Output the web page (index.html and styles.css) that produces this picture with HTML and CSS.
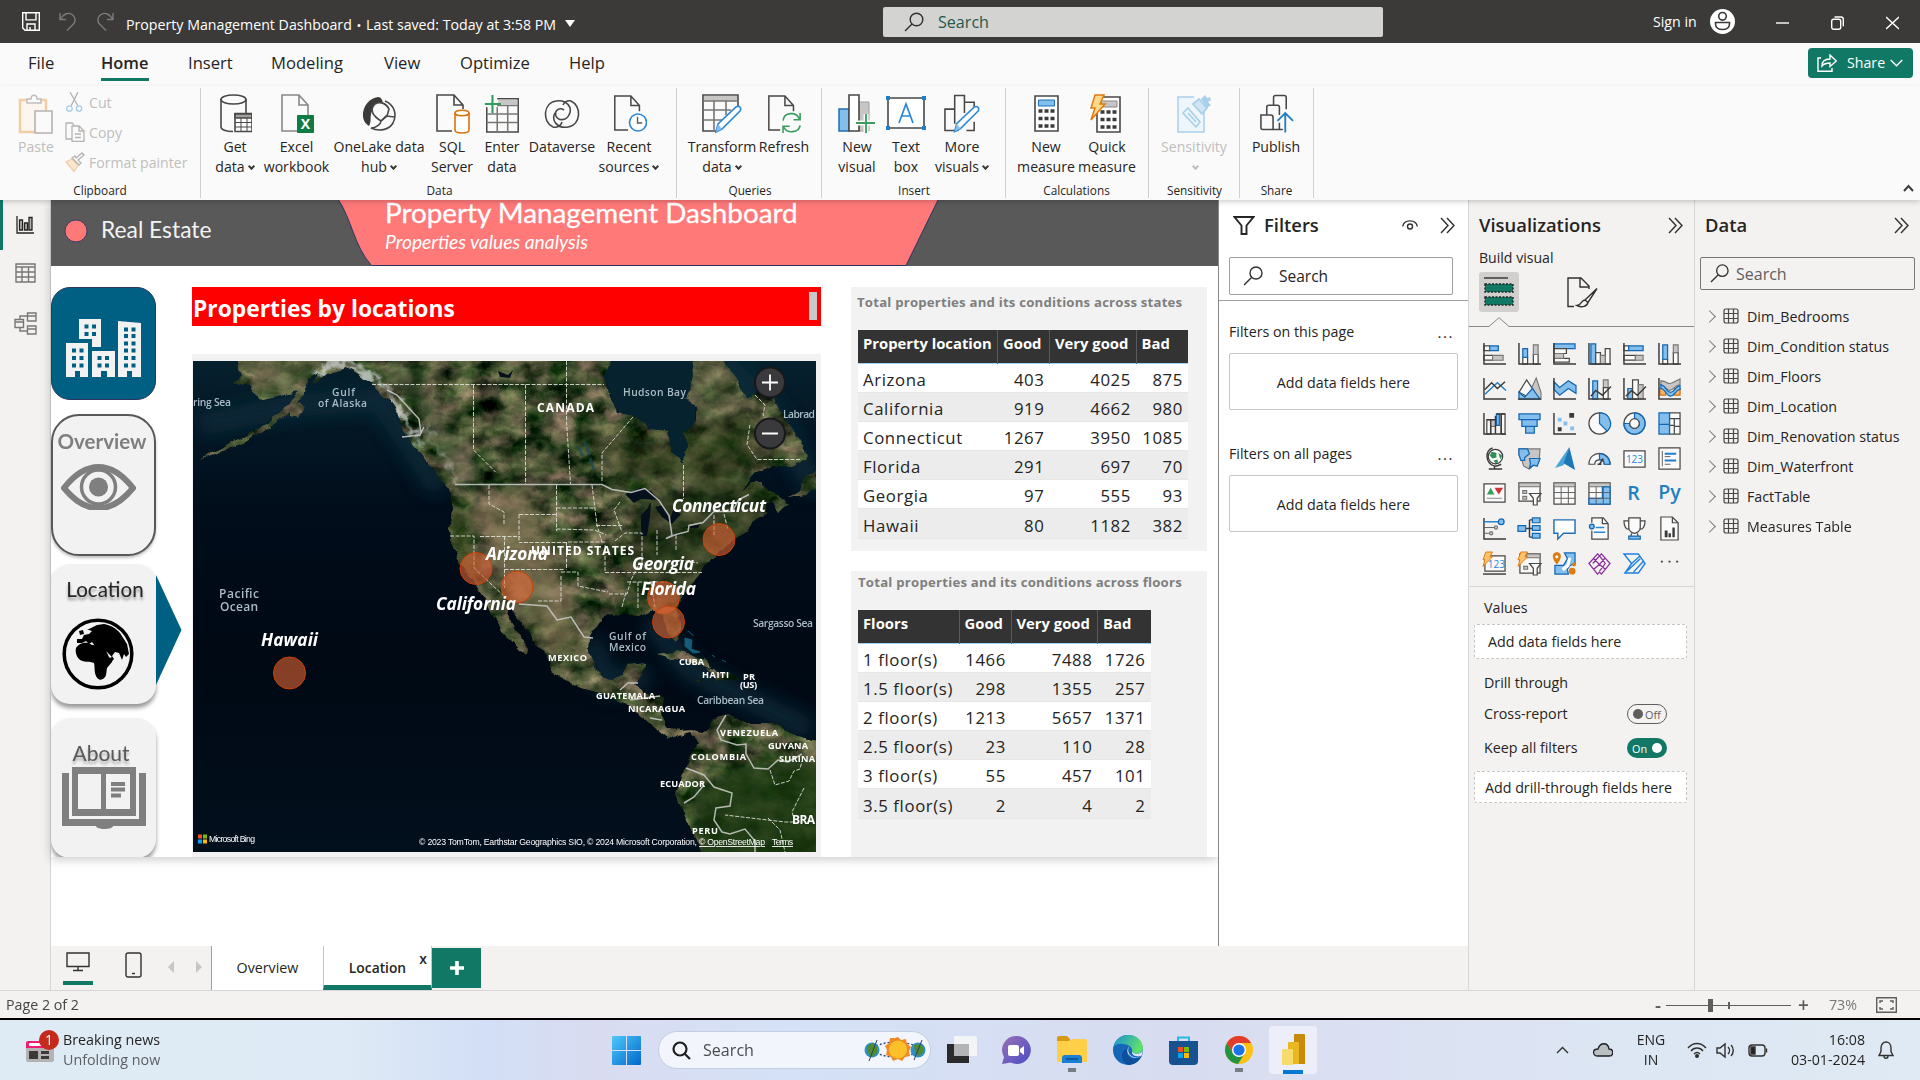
FILE: index.html
```html
<!DOCTYPE html>
<html lang="en">
<head>
<meta charset="utf-8">
<title>Property Management Dashboard</title>
<link rel="stylesheet" href="styles.css">
</head>
<body>
<div class="app">
  <header class="titlebar">
    <div class="quick">
      <svg width="18" height="19" viewBox="0 0 18 19" class="ln white"><path d="M.7 .7h16.6v17.6H3L.7 16zM4 .7v7.2h10V.7M5 18v-6h8v6M8 18v-3"/></svg>
      <svg width="18" height="19" viewBox="0 0 18 19" class="ln dim"><path d="M1 1v6.500h6M1 7.500C4 2 9 0 13 2.500s4 7 1 10L8 18.500"/></svg>
      <svg width="18" height="19" viewBox="0 0 18 19" class="ln dim"><path d="M17 1v6.500h-6M17 7.500C14 2 9 0 5 2.500s-4 7-1 10l6 6"/></svg>
    </div>
    <div class="doc">Property Management Dashboard <b>•</b> Last saved: Today at 3:58 PM <i class="tri"></i></div>
    <div class="topsearch"><svg width="20" height="20" viewBox="0 0 20 20" class="ln"><circle cx="12.500" cy="7.500" r="6.300"/><path d="M8 12L1 19"/></svg>Search</div>
    <div class="signin">Sign in
      <svg width="25" height="25" viewBox="0 0 25 25"><circle cx="12.500" cy="12.500" r="12.500" fill="#fff"/><g fill="none" stroke="#3b3a39" stroke-width="1.600"><circle cx="12.500" cy="7.300" r="3.800"/><path d="M5.500 13.500h14v1.500c0 3.500-3 5.500-7 5.500s-7-2-7-5.500z"/></g></svg>
    </div>
    <div class="winbtns">
      <svg width="13" height="14" viewBox="0 0 13 14" class="ln white"><path d="M0 7h13"/></svg>
      <svg width="13" height="14" viewBox="0 0 13 14" class="ln white"><rect x=".700" y="3.300" width="9" height="10" rx="2"/><path d="M3.500 1h6.500q2.300 0 2.300 2.300v7"/></svg>
      <svg width="13" height="14" viewBox="0 0 13 14" class="ln white"><path d="M0 1l13 12M13 1L0 13"/></svg>
    </div>
  </header>

  <nav class="menubar">
    <span class="m1">File</span><span class="m2 on">Home</span><span class="m3">Insert</span><span class="m4">Modeling</span><span class="m5">View</span><span class="m6">Optimize</span><span class="m7">Help</span>
    <div class="share"><svg width="20" height="18" viewBox="0 0 20 18" class="ln white"><path d="M4 4H1v13.300h14V14M5 12c0-5 3-7 8-7V1l6.300 6L13 12.500V9c-4 0-6 .500-8 3z"/></svg><span>Share</span><svg width="13" height="8" viewBox="0 0 13 8" class="ln white"><path d="M.7 1l5.800 5.800L12.300 1"/></svg></div>
  </nav>

  <section class="ribbon">
    <div class="group g-clip">
      <div class="btns">
        <div class="rb off paste"><svg width="36" height="40" viewBox="0 0 36 40"><path d="M2 6h26v32H2z" fill="#fdf6ec" stroke="#f2cda5" stroke-width="2.500"/><path d="M9 9V5h4c0-5 6-5 6 0h4v4z" fill="#fafafa" stroke="#c0bebd" stroke-width="1.500"/><path d="M17 17h17v22H17z" fill="#fafafa" stroke="#b5b3b2" stroke-width="1.600"/></svg><p>Paste</p></div>
        <div class="clips">
          <div><svg width="20" height="20" viewBox="0 0 20 20" fill="none" stroke-width="1.300"><path d="M5 0l8 14M13 0L6 14" stroke="#b5b3b2"/><circle cx="4.500" cy="16.500" r="2.700" stroke="#a3cdec"/><circle cx="14" cy="16.500" r="2.700" stroke="#a3cdec"/></svg>Cut</div>
          <div><svg width="20" height="20" viewBox="0 0 20 20" fill="none" stroke-width="1.300" stroke="#b5b3b2"><path d="M7 17H1V1h6l2 2M7 4h7l5 5v10.300H7zM14 4v5h5M10 12h6M10 15.500h6"/></svg>Copy</div>
          <div><svg width="20" height="20" viewBox="0 0 20 20" fill="#fafafa" stroke-width="1.300"><path d="M1 10l6-3 6 6-4 6.500z" fill="#fbe6cf" stroke="#f2cda5"/><path d="M7 6l7 7 2-2-3-3 6-5-2-2-6 5-1-2z" stroke="#b5b3b2"/></svg>Format painter</div>
        </div>
      </div>
      <h6>Clipboard</h6>
    </div>
    <div class="group g-data">
      <div class="btns">
        <div class="rb w56"><svg width="34" height="40" viewBox="-2 0 34 40"><g class="ico"><path d="M1 5v28c0 2.500 5 4.500 12 4.500M26 5v14"/><ellipse cx="13.500" cy="5.500" rx="12.500" ry="4.500"/><path d="M15 19.500h17v18H15z" fill="#fff"/><path d="M15 20h17v4H15z" fill="#a19f9d"/><path d="M15 28.500h17M15 33h17M21 24v13.500M27 24v13.500" stroke-width="1"/></g></svg><p>Get<br>data<u></u></p></div>
        <div class="rb w67"><svg width="34" height="40" viewBox="-1 0 34 40"><g class="ico"><path d="M16 37H1V1h17l9 10v11M18 1v10h9" stroke="#8a8886"/></g><rect x="16" y="21" width="17" height="18" rx="1" fill="#107c41"/><text x="24.500" y="35" class="xl">X</text></svg><p>Excel<br>workbook</p></div>
        <div class="rb w98"><svg width="36" height="38" viewBox="0 0 36 38"><path d="M17 2c-8 1-16 9-15 20 1 5 3 7 6 9 4-6-2-12 8-22l6 1c0-5-2-8-5-8z" fill="#3b3a39"/><g class="ico"><path d="M14 9c5-3 11-1 14 5l-2 7-6 5C12 21 8 15 14 9z" fill="#fafafa"/><path d="M24 6c10 4 12 14 8 22-4 7-14 9-22 5 5 0 10-4 10-7l5-5 9 1"/></g></svg><p>OneLake data<br>hub<u></u></p></div>
        <div class="rb w48"><svg width="36" height="40" viewBox="-2 0 36 40"><g class="ico"><path d="M16 37H1V1h17l9 10v4M18 1v10h9"/></g><g fill="#fff" stroke="#d9730d" stroke-width="1.600"><path d="M19 19v17c0 4 14 4 14 0V19"/><ellipse cx="26" cy="19" rx="7" ry="2.700"/></g></svg><p>SQL<br>Server</p></div>
        <div class="rb w52"><svg width="36" height="42" viewBox="0 0 36 42"><g class="ico"><path d="M2 14v26h33V5H13"/><path d="M14 6h20v5H14z" fill="#c8c6c4" stroke="none"/><path d="M2 21h33M2 30h33M13 14v26M24 12v28M13 12h22" stroke="#797775"/></g><path d="M8 1v19M0 10.500h17" stroke="#2f9e5b" stroke-width="2.200"/></svg><p>Enter<br>data</p></div>
        <div class="rb w68"><svg width="36" height="38" viewBox="0 0 36 38"><g class="ico"><path d="M9 32C-2 27-1 8 12 6c11-2 17 7 13 14-3 6-11 6-13 1-2-6 4-9 8-6M27 6c11 5 10 24-3 26-11 2-17-7-13-14M9 32c4 1 8-1 9-5M27 6c-3-1-7 1-8 4"/></g></svg><p>Dataverse</p></div>
        <div class="rb w66"><svg width="36" height="40" viewBox="-3 0 38 40"><g class="ico"><path d="M15 37H1V1h17l9 10v6M18 1v10h9"/></g><circle cx="25.500" cy="29" r="9" fill="#fff" stroke="#2b88d8" stroke-width="1.700"/><path d="M25 23v6.500h5" fill="none" stroke="#605e5c" stroke-width="1.500"/></svg><p>Recent<br>sources<u></u></p></div>
      </div>
      <h6>Data</h6>
    </div>
    <div class="group g-query">
      <div class="btns">
        <div class="rb w68"><svg width="40" height="40" viewBox="0 0 40 40"><g class="ico"><path d="M14 37H1V1h35v12"/><path d="M2 2h33v5H2z" fill="#c8c6c4" stroke="none"/><path d="M1 7h35M1 16h28M1 26h20M12 7v30M24 7v14" stroke="#797775"/></g><path d="M14 38l2-8 18-17c3-2 6 1 4 4L20 35z" fill="#fff" stroke="#2b88d8" stroke-width="1.600"/><path d="M14 38l2-8 4 5z" fill="#83beec"/></svg><p>Transform<br>data<u></u></p></div>
        <div class="rb w56"><svg width="36" height="40" viewBox="-2 0 38 40"><g class="ico"><path d="M13 37H1V1h17l9 10v6M18 1v10h9"/></g><path d="M16 27c1-9 14-10 17-2M34 19v7h-7M34 32c-1 8-14 9-17 2M16 40v-7h7" fill="none" stroke="#3a9c5f" stroke-width="1.700"/></svg><p>Refresh</p></div>
      </div>
      <h6>Queries</h6>
    </div>
    <div class="group g-insert">
      <div class="btns">
        <div class="rb w50"><svg width="38" height="40" viewBox="0 0 38 40"><path d="M21 8h10v29H21z" fill="#c8c6c4" stroke="#a19f9d"/><path d="M1 15h10v22H1z" fill="#83beec" stroke="#1f6fb5" stroke-width="1.500"/><path d="M11 1h10v36H11z" class="ico wh"/><path d="M28 20v19M18 29h19" stroke="#fafafa" stroke-width="5"/><path d="M28 20v19M18 29h19" stroke="#3a9c5f" stroke-width="1.800"/></svg><p>New<br>visual</p></div>
        <div class="rb w48"><svg width="40" height="40" viewBox="0 0 40 40"><path d="M2 4h36v30H2z" class="ico wh"/><path d="M0 2h4v4H0zM36 2h4v4h-4zM0 32h4v4H0zM36 32h4v4h-4z" fill="#1f7fc9"/><path d="M13 29l7-19 7 19M15.500 22h9" fill="none" stroke="#2b88d8" stroke-width="1.700"/></svg><p>Text<br>box</p></div>
        <div class="rb w64"><svg width="38" height="40" viewBox="-1 0 39 40"><g class="ico"><path d="M15 37H1V15h10M11 30V1h10v18M21 8h10v5M31 28v9h-8"/></g><path d="M11 38l2-8 18-17c3-2 6 1 4 4L17 35z" fill="#fff" stroke="#2b88d8" stroke-width="1.600"/><path d="M11 38l2-8 4 5z" fill="#83beec"/></svg><p>More<br>visuals<u></u></p></div>
      </div>
      <h6>Insert</h6>
    </div>
    <div class="group g-calc">
      <div class="btns">
        <div class="rb w60"><svg width="25" height="38" viewBox="0 0 25 38"><path d="M1 1h23v35H1z" class="ico wh"/><path d="M4.500 5h16v6h-16z" fill="#83beec" stroke="#1f6fb5"/><path d="M4.500 16h16M4.500 23.500h16M4.500 31h16" stroke="#3b3a39" stroke-width="3.600" stroke-dasharray="4 2"/></svg><p>New<br>measure</p></div>
        <div class="rb w62"><svg width="34" height="40" viewBox="2 0 34 40"><path d="M9 3h23v35H9z" class="ico wh"/><path d="M13 7h16v6H13z" fill="#c8c6c4" stroke="#8a8886"/><path d="M12.500 18h16M12.500 25.500h16M12.500 33h16" stroke="#3b3a39" stroke-width="3.600" stroke-dasharray="4 2"/><path d="M7 1h9l-4 9h5L3 26l4-12H3z" fill="#ffd98a" stroke="#e07a10" stroke-width="1.500"/></svg><p>Quick<br>measure</p></div>
      </div>
      <h6>Calculations</h6>
    </div>
    <div class="group g-sens">
      <div class="btns">
        <div class="rb off w76"><svg width="36" height="40" viewBox="0 0 36 40"><path d="M18 3H2v35h26V18" fill="#eef6fc" stroke="#a9d0ea" stroke-width="1.500"/><path d="M7 19l5-5 12 14-4 5zM12 19l8 9" fill="#eef6fc" stroke="#a9d0ea" stroke-width="1.700"/><path d="M17 10l6-5 8 9-5 6z" fill="#cfe5f5" stroke="#a9d0ea" stroke-width="1.700"/><path d="M25 5l4-4 2 3 3-1 1 3-3 2 3 3-4 3z" fill="#a9d0ea"/></svg><p>Sensitivity<br><u></u></p></div>
      </div>
      <h6>Sensitivity</h6>
    </div>
    <div class="group g-share">
      <div class="btns">
        <div class="rb w64"><svg width="36" height="40" viewBox="-2 0 37 40"><g class="ico"><path d="M1 21h10q2.500 0 2.500 2.500V36H3q-2 0-2-2zM7 21V13q0-2 2-2h9q2 0 2 2v8M13.500 36h10M20 29v7M14 11V3q0-2 2-2h9q2 0 2 2v12"/></g><path d="M26 19v20M18 27l8-8 8 8" fill="none" stroke="#2080c0" stroke-width="1.900"/></svg><p>Publish</p></div>
      </div>
      <h6>Share</h6>
    </div>
    <svg class="collapse" width="11" height="8" viewBox="0 0 11 8"><path d="M1 7l4.500-5L10 7" fill="none" stroke="#3b3a39" stroke-width="2"/></svg>
  </section>

  <main class="work">
    <aside class="rail">
      <svg width="18" height="18" viewBox="0 0 18 18" fill="#b3b0ad" stroke="#252423" stroke-width="1.300"><path d="M1 0v17h17" fill="none"/><path d="M3.500 4h3v10h-3zM8.500 7h3v7h-3zM13 1.500h3V14h-3z"/></svg>
      <svg width="21" height="20" viewBox="0 0 21 20" fill="none" stroke="#797775" stroke-width="1.400"><path d="M1 1h19v18H1zM1 4h19M1 9h19M1 14h19M7 4v15M13.500 4v15"/></svg>
      <svg width="23" height="23" viewBox="0 0 23 23" fill="#f3f2f1" stroke="#797775" stroke-width="1.400"><path d="M13 4H6v15h8" fill="none"/><path d="M13.500 1H22v8h-8.500zM13.500 4H22M13.500 14H22v8h-8.500zM13.500 17H22M1 7.500h8.500v8H1zM1 10h8.500"/></svg>
    </aside>

    <div class="stage">
      <div class="page">
        <div class="banner">
          <svg width="1167" height="66" viewBox="51 200 1167 66"><path d="M338 199C352 220 354 246 371.500 265.500H906L938.500 199z" fill="#ff7979" stroke="#2f3560"/><circle cx="76" cy="231" r="11" fill="#ff7979" stroke="#3c3c66"/></svg>
          <span class="brand">Real Estate</span>
          <div class="headline"><strong>Property Management Dashboard</strong><em>Properties values analysis</em></div>
        </div>
        <div class="content">
          <div class="tiles">
            <div class="tile logo"><svg width="75" height="58" viewBox="0 0 75 58"><path d="M13 0h22v28h-9v-8H13zM0 24h22v34h-8v-6H9v6H0zM26 32h23v26h-8v-6h-6v6h-9zM52 2l23 2v54h-9v-6h-5v6h-9z" fill="#f2f2f2"/><path d="M18.500 7.500h13.500M18.500 15h13.500M6 31.500h13.500M6 39h13.500M6 46.500h13.500M31.500 39h13.500M31.500 46.500h13.500M58 10.500h13.500M58 17h13.500M58 24.500h13.500M58 31.500h13.500M58 39h13.500M58 46.500h13.500" stroke="#006083" stroke-width="4" stroke-dasharray="4 3.500 4 20"/></svg></div>
            <div class="tile over"><b>Overview</b><svg width="75" height="46" viewBox="0 0 75 46"><path d="M3 24C25-4 50-4 72 24 50 51 25 51 3 24z" fill="#f2f2f2" stroke="#7f7f7f" stroke-width="6" stroke-linejoin="round"/><circle cx="37.500" cy="23" r="17" fill="#f2f2f2" stroke="#7f7f7f" stroke-width="3.500"/><circle cx="37.500" cy="23" r="9.500" fill="#7f7f7f"/></svg></div>
            <div class="tile loc"><b>Location</b><svg width="72" height="72" viewBox="0 0 72 72"><circle cx="36" cy="36" r="33.800" fill="#f2f2f2" stroke="#000" stroke-width="3.500"/><path d="M14 30c3-5 8-6 13-5 3 3 6 2 9 2l6 1 4 9c1 3 3 4 5 3l-1 4-5 6-1 7c-2 6-8 6-10 1-2-5-1-9-2-13-4-2-11 0-15-4-3-3-4-8-3-11z"/><path d="M25 12l10-5 7-1c6 1 12 4 16 9l7 11 2 10-3 3-2-3-2 6-3-7-4-1-3 4 2 3-5 5-7-9 2-1 4 5 4-2-5-5-3-2-3-4-6 0-3-4-3 2-3-3-4 2-5 0 0-4 5 0 2-4 5-1 3-3-3-1zM17 13l4-1 1 4-4 1z"/></svg><svg class="arrow" width="26" height="110" viewBox="0 0 26 110"><path d="M0 0l25.500 55L0 110z" fill="#006083"/></svg></div>
            <div class="tile about"><b>About</b><svg width="84" height="62" viewBox="0 0 84 62" fill="#7f7f7f"><path d="M0 6h7v46h70V6h7v53H51c0 4-17 4-17 0H0z"/><path fill-rule="evenodd" d="M10 0h64v49H10zM16 7v35h23V7zM44 7v35h24V7z"/><path d="M49 15h14v4H49zM49 20.500h14v4H49zM49 26.500h10v4H49z"/></svg></div>
          </div>

          <div class="mapcol">
            <div class="redtitle"><span>Properties by locations</span><i></i></div>
            <div class="mapbox">
              <svg class="map" width="623" height="491" viewBox="193 361 623 491">
                <defs>
                  <filter id="terrain" x="0" y="0" width="100%" height="100%" color-interpolation-filters="sRGB">
                    <feTurbulence type="fractalNoise" baseFrequency="0.04 0.055" numOctaves="6" seed="11" result="n"/>
                    <feColorMatrix in="n" values="0.95 0 0 0 -0.215  0.72 0.2 0 0 -0.165  0.65 0 0 0 -0.14  0 0 0 0 1" result="c"/>
                    <feComposite in="c" in2="SourceGraphic" operator="in"/>
                  </filter>
                  <filter id="rough" x="-5%" y="-5%" width="110%" height="110%"><feTurbulence type="fractalNoise" baseFrequency="0.08" numOctaves="3" seed="4"/><feDisplacementMap in="SourceGraphic" scale="7" xChannelSelector="R" yChannelSelector="G"/></filter>
                  <filter id="snow" x="-10%" y="-10%" width="120%" height="120%" color-interpolation-filters="sRGB"><feTurbulence type="fractalNoise" baseFrequency="0.11" numOctaves="4" seed="7"/><feDisplacementMap in="SourceGraphic" scale="26" xChannelSelector="R" yChannelSelector="G"/><feGaussianBlur stdDeviation="1"/></filter>
                  <filter id="soft"><feGaussianBlur stdDeviation="9"/></filter>
                  <filter id="soft2" x="-10%" y="-10%" width="120%" height="120%"><feGaussianBlur stdDeviation="7"/></filter>
                  <linearGradient id="sea" x1="0" y1="0" x2="0" y2="1"><stop offset="0" stop-color="#06202d"/><stop offset=".3" stop-color="#010d1b"/><stop offset=".6" stop-color="#000914"/><stop offset="1" stop-color="#020f1c"/></linearGradient>
                  <path id="coast" d="M236 345L241 375 233 383 250 386 262 400 278 397 297 392 284 410 266 424 240 438 215 452 200 460 216 455 242 443 268 428 285 417 300 400 304 388 309 378 318 372 314 384 327 374 347 368 370 382 388 398 397 412 402 428 414 446 428 464 442 480 450 492 453 510 450 530 452 546 460 564 474 583 486 600 492 615 505 634 525 655 529 649 518 632 507 614 510 608 520 620 531 637 550 660 552 672 578 687 603 694 623 704 645 718 657 730 668 739 680 735 690 732 698 741 692 757 681 775 675 793 682 810 694 833 706 865 830 865 830 748 791 733 773 723 747 723 727 714 712 722 702 733 693 730 680 731 667 727 661 714 664 697 643 693 636 684 643 671 645 663 628 665 623 675 607 681 594 668 588 648 592 633 603 618 623 612 640 617 652 611 664 616 667 630 674 642 680 638 680 624 676 608 684 592 699 575 710 559 728 545 744 532 753 522 766 513 764 504 772 500 778 512 788 505 782 496 768 490 759 482 751 482 741 492 752 476 774 466 793 466 806 459 803 444 782 414 771 393 762 388 747 399 737 380 712 345 690 345 693 377 686 398 697 407 697 423 684 433 687 447 682 465 672 452 668 432 650 430 633 416 617 413 610 397 605 377 614 345z"/>
                  <clipPath id="landclip"><use href="#coast"/></clipPath>
                </defs>
                <rect x="193" y="361" width="623" height="491" fill="url(#sea)"/>
                <path d="M600 361h95v70l-15 40-60-50zM700 361h60l-10 40z" fill="#06222e"/>
                <g fill="none" stroke="#0a2f3c" stroke-width="22" filter="url(#soft)" opacity=".8"><path d="M200 425L300 405 380 400 440 490M590 640l20 45 40-10M650 620l40 50 60 30 60 30M710 350l60 60 46 80"/></g>
                <g filter="url(#rough)">
                  <g filter="url(#terrain)">
                    <use href="#coast" fill="#1f2f20"/>
                    <path d="M806 476l-6 14-12 8 10-2 10-1 8-8v-16zM658 655l20-4 30 9 2 8-20-6-26-5zM706 668l22 6 11 4-22 3zM696 680h9l-8 2zM747 687h8l-7 2zM290 408l10-6 6 4-8 12-8-2z" fill="#26361f"/>
                  </g>
                  <g clip-path="url(#landclip)">
                    <g filter="url(#soft2)">
                      <path d="M395 361l40 60 35 60" stroke="#5d6a4c" stroke-width="16" fill="none" opacity=".5"/>
                      <path d="M470 510l50-30 40 90 20 90-30-10-50-70z" fill="#94805f" opacity=".6"/>
                      <path d="M455 510l14 60" stroke="#3f4b24" stroke-width="10"/>
                      <path d="M690 790l50-25 96-10v107H702z" fill="#153a14" opacity=".8"/>
                      <path d="M640 500l60-20 60-10 10 50-60 50-30 30-60 0z" fill="#1c3214" opacity=".55"/>
                      <path d="M590 430l60 10 90-30 40 40-60 30-110 0z" fill="#2c3a1c" opacity=".5"/>
                      <path d="M246 355h80l-40 50-30-20z" fill="#86835f" opacity=".45"/>
                      <path d="M640 350h70l40 60-50 10z" fill="#777252" opacity=".35"/>
                    </g>
                    <path d="M312 376l16-10 20-2 36 22 14 22 12 20 10 14" stroke="#dfe6e8" stroke-width="7" fill="none" opacity=".7" filter="url(#snow)"/>
                    <path d="M425 425l24 40 14 20" stroke="#cfd6d4" stroke-width="2.500" fill="none" opacity=".5" filter="url(#snow)"/>
                  </g>
                </g>
                <g fill="#05101c"><path d="M625 494l15-6 11 3 8 9-18-1-7 4zM641 515l6-6 4-7-1 14-3 20-6 0zM655 507l8-2 7 15 3-10 8 4-9 10-10-7zM664 538l16-6 1 3zM684 528l16-4-2 4z"/><path d="M498 371l10 4 5-5-3 8-10-1z"/></g>
                <path d="M578 446l5 10M584 441l6 14M590 458l4 12" stroke="#1b4a52" stroke-width="3" opacity=".7"/>
                <path d="M685 638l7 2-1 9 9 3-7 1-8-7zM688 631l6 5M712 655l3 2M722 660l4 2" fill="#1a6f92" stroke="#1a6f92" opacity=".8"/>
                <g fill="none" stroke="#e2e6de" stroke-width="1" stroke-dasharray="4 1.500" opacity=".85">
                  <path d="M372 384.500H604M473.500 384.500V450l22 22M525.500 384.500V484M566.500 361v60l4 63M633 417l-31 36v29M683.500 465v34M755 395l10 10-2 10 10 12M800 459.500H757l-10-15 3-20"/>
                  <path d="M489 485v19l15 8v12M556.500 485v46M592 485l5 40 5 17M556.500 508h38M519 514.500h38M519 514.500v28h48M556.500 529l38 1 12 5M596 525.500h27M480 536.500h40M450 536h24v32l32 30M504.500 536v52M504.500 569.500h60M566.500 542v28M605 542h-38M605 545v27M561 576v25h-24M561 572h17v14l30 6M605 572.500h97M609 594h18l4-14 8-16M627 582h40M622 607l4-15M638 582v26M651 582l4 25M615 541l10-8h17v30M657 530v25M676 535v16M680 560l18 3M714 515v20M724 514l4 16M620 502l-6 8 8 22"/>
                  <path d="M770 770l5 15 14-4 5-10 6-2 2-8M804 788l-12 24 3 10-10 0-60-7M768 818l12 12 5 22"/>
                </g>
                <g fill="none" stroke="#c3c6c2" stroke-width="1.500" opacity=".9">
                  <path d="M402 437l18-2 4-8M455 484.500H602l10 5 19 3 14-4 14 12 10 15 3 20-6 3 10-4 12-3 1-6 14-3 11-11h18l7-12 10-5M387 390l10 5 22 24 2 14M519 604l28 2 10 14 14-3 13 20 9 1M620 690l8-7h10M630 700l30-4M650 718l12 2M726 715l-9 15 4 10 16 5 9-1 0 10 8 14 14 1 10-9 10 2 14-8M686 768l18 7 10 12 18 6-2 13-14 2-2 12 8 12 8 2 15-5 10 12v16M684 803l10-6 10-12"/>
                </g>
                <g class="lbl"><text x="193" y="406" textLength="38">ring Sea</text><text x="332" y="396" textLength="23">Gulf</text><text x="318" y="407" textLength="49">of Alaska</text><text x="623" y="396" textLength="63">Hudson Bay</text><text x="783" y="418" textLength="32">Labrad</text><text x="219" y="598" textLength="40" class="big">Pacific</text><text x="220" y="611" textLength="38" class="big">Ocean</text><text x="609" y="640" textLength="37">Gulf of</text><text x="609" y="651" textLength="37">Mexico</text><text x="753" y="627" textLength="60">Sargasso Sea</text><text x="697" y="704" textLength="67">Caribbean Sea</text></g>
                <g class="lbl land"><text x="537" y="412" textLength="57" class="big">CANADA</text><text x="531" y="555" textLength="103" class="big">UNITED STATES</text><text x="548" y="661" textLength="39">MEXICO</text><text x="679" y="665" textLength="25">CUBA</text><text x="702" y="678" textLength="27">HAITI</text><text x="743" y="680" textLength="12">PR</text><text x="740" y="688" textLength="17">(US)</text><text x="596" y="699" textLength="59">GUATEMALA</text><text x="628" y="712" textLength="57">NICARAGUA</text><text x="720" y="736" textLength="58">VENEZUELA</text><text x="768" y="749" textLength="40">GUYANA</text><text x="779" y="762" textLength="36">SURINA</text><text x="691" y="760" textLength="55">COLOMBIA</text><text x="660" y="787" textLength="45">ECUADOR</text><text x="792" y="824" textLength="23" class="big">BRA</text><text x="692" y="834" textLength="26">PERU</text></g>
                <g class="bubble"><circle cx="289.500" cy="673" r="16"/><circle cx="476" cy="568.500" r="16"/><circle cx="517" cy="587" r="16"/><circle cx="719" cy="539.500" r="16"/><circle cx="663.500" cy="597.500" r="16"/><circle cx="668.500" cy="622" r="16"/></g>
                <g class="city"><text x="261" y="646" textLength="57">Hawaii</text><text x="486" y="560" textLength="62">Arizona</text><text x="436" y="610" textLength="80">California</text><text x="672" y="512" textLength="94">Connecticut</text><text x="632" y="570" textLength="62">Georgia</text><text x="641" y="595" textLength="55">Florida</text></g>
                <g><circle cx="770" cy="382.500" r="15" fill="#3a3a3c" stroke="#17181b" stroke-width="2"/><circle cx="770" cy="433.500" r="15" fill="#3a3a3c" stroke="#17181b" stroke-width="2"/><path d="M762 382.500h16M770 374.500v16M762 433.500h16" stroke="#fff" stroke-width="1.800"/></g>
                <path d="M198 834.500h4v4h-4z" fill="#f25022"/><path d="M203 834.500h4v4h-4z" fill="#7fba00"/><path d="M198 839.500h4v4h-4z" fill="#00a4ef"/><path d="M203 839.500h4v4h-4z" fill="#ffb900"/>
                <g class="credit"><text x="209" y="842" textLength="46">Microsoft Bing</text><text x="419" y="845" textLength="278">© 2023 TomTom, Earthstar Geographics SIO, © 2024 Microsoft Corporation,</text><text x="699" y="845" textLength="66" text-decoration="underline">© OpenStreetMap</text><text x="772" y="845" textLength="21" text-decoration="underline">Terms</text></g>
              </svg>
            </div>
          </div>

          <div class="tablecol">
            <div class="card states">
              <h4>Total properties and its conditions across states</h4>
              <table>
                <colgroup><col class="c140"><col class="c52"><col class="c86"><col class="c52"></colgroup>
                <tr><th>Property location</th><th>Good</th><th>Very good</th><th>Bad</th></tr>
                <tr><td>Arizona</td><td>403</td><td>4025</td><td>875</td></tr>
                <tr><td>California</td><td>919</td><td>4662</td><td>980</td></tr>
                <tr><td>Connecticut</td><td>1267</td><td>3950</td><td>1085</td></tr>
                <tr><td>Florida</td><td>291</td><td>697</td><td>70</td></tr>
                <tr><td>Georgia</td><td>97</td><td>555</td><td>93</td></tr>
                <tr><td>Hawaii</td><td>80</td><td>1182</td><td>382</td></tr>
              </table>
            </div>
            <div class="card floors">
              <h4>Total properties and its conditions across floors</h4>
              <table>
                <colgroup><col class="c101"><col class="c52"><col class="c86"><col class="c53"></colgroup>
                <tr><th>Floors</th><th>Good</th><th>Very good</th><th>Bad</th></tr>
                <tr><td>1 floor(s)</td><td>1466</td><td>7488</td><td>1726</td></tr>
                <tr><td>1.5 floor(s)</td><td>298</td><td>1355</td><td>257</td></tr>
                <tr><td>2 floor(s)</td><td>1213</td><td>5657</td><td>1371</td></tr>
                <tr><td>2.5 floor(s)</td><td>23</td><td>110</td><td>28</td></tr>
                <tr><td>3 floor(s)</td><td>55</td><td>457</td><td>101</td></tr>
                <tr><td>3.5 floor(s)</td><td>2</td><td>4</td><td>2</td></tr>
              </table>
            </div>
          </div>
        </div>
      </div>
      <div class="below"></div>
      <footer class="tabs">
        <div class="device on"><svg width="24" height="20" viewBox="0 0 24 20" class="ln"><path d="M1 1h22v13.500H1zM12 15v3.500M7 18.500h10"/></svg></div>
        <div class="device ph"><svg width="17" height="26" viewBox="0 0 17 26" class="ln"><rect x="1" y="1" width="15" height="24" rx="2"/><path d="M7 21.500h3"/></svg></div>
        <i class="pv"></i><i class="nx"></i>
        <div class="tab t1">Overview</div>
        <div class="tab t2">Location<sup>x</sup></div>
        <div class="plus"><svg width="14" height="14" viewBox="0 0 14 14"><path d="M7 0v14M0 7h14" stroke="#fff" stroke-width="3.600"/></svg></div>
      </footer>
    </div>

    <aside class="filters">
      <div class="fbody">
        <div class="head"><svg width="22" height="19" viewBox="0 0 22 19" fill="none" stroke="#252423" stroke-width="1.900"><path d="M1.500 1h19L13.500 9.500V18h-5V9.500z"/></svg><h3>Filters</h3><svg width="16" height="12" viewBox="0 0 16 12" class="ln eye"><path d="M.7 7.500C2 0 14 0 15.300 7.500"/><circle cx="8" cy="7.500" r="2.500"/></svg><svg width="15" height="17" viewBox="0 0 15 17" class="ln dbl"><path d="M1 1l7 7.500L1 16M7 1l7 7.500L7 16"/></svg></div>
        <div class="search"><svg width="20" height="20" viewBox="0 0 20 20" class="ln"><circle cx="13" cy="7" r="6"/><path d="M8.500 11.500L1 19"/></svg>Search</div>
        <hr>
        <div class="sect a"><span>Filters on this page</span><span class="dots">...</span></div>
        <div class="drop">Add data fields here</div>
        <div class="sect b"><span>Filters on all pages</span><span class="dots">...</span></div>
        <div class="drop">Add data fields here</div>
      </div>
    </aside>

    <aside class="viz">
      <div class="head"><h3>Visualizations</h3><svg width="15" height="17" viewBox="0 0 15 17" class="ln"><path d="M1 1l7 7.500L1 16M7 1l7 7.500L7 16"/></svg></div>
      <h5>Build visual</h5>
      <div class="modes">
        <div class="mode sel"><svg width="30" height="30" viewBox="0 0 30 30"><path d="M0 1h24" stroke="#252423" stroke-width="1.300"/><path d="M1 7h28v8H1zM1 20h28v8H1z" fill="#117865" stroke="#252423" stroke-dasharray="2 1.500" stroke-width="1.400"/></svg></div>
        <svg width="31" height="31" viewBox="0 0 31 31" class="ln brush"><path d="M7 29.500H1V1h13l8 8v3M13 1v9h9M30 11.500L18 23l3 2.500zM18 23c-4 0-3 5-8 5.500 5 2.500 10 1 11-3"/></svg>
      </div>
      <svg class="notch" width="225" height="11" viewBox="0 0 225 11"><path d="M0 9.500h20L30 .700l10 8.800h185" fill="none" stroke="#8a8886"/></svg>
      <div class="icons">
        <svg viewBox="0 0 24 24"><path class="w" d="M1 4h6v5H1zM1 14h9v5H1z"/><path class="b" d="M7 4h9v5H7z"/><path class="g" d="M10 14h11v5H10z"/><path class="k" d="M1 1v22h23"/></svg>
        <svg viewBox="0 0 24 24"><path class="w" d="M5 16h5v7H5zM16 13h5v10h-5z"/><path class="b" d="M5 7h5v9H5z"/><path class="g" d="M16 3h5v10h-5z"/><path class="k" d="M1 1v22h23"/></svg>
        <svg viewBox="0 0 24 24"><path class="b" d="M1 2h22v5H1z"/><path class="w" d="M1 7h13v5H1zM1 17h16v4H1z"/><path class="g" d="M1 12h10v5H1z"/><path class="k" d="M1 1v22h23"/></svg>
        <svg viewBox="0 0 24 24"><path class="b" d="M3 2h5v21H3z"/><path class="w" d="M8 11h5v12H8zM18 7h5v16h-5z"/><path class="g" d="M13 14h5v9h-5z"/><path class="k" d="M1 1v22h23"/></svg>
        <svg viewBox="0 0 24 24"><path class="w" d="M1 4h5v5H1zM1 14h12v5H1z"/><path class="b" d="M6 4h15v5H6z"/><path class="g" d="M13 14h8v5h-8z"/><path class="k" d="M1 1v22h23"/></svg>
        <svg viewBox="0 0 24 24"><path class="w" d="M5 18h5v5H5zM16 11h5v12h-5z"/><path class="b" d="M5 3h5v15H5z"/><path class="g" d="M16 3h5v8h-5z"/><path class="k" d="M1 1v22h23"/></svg>

        <svg viewBox="0 0 24 24"><path d="M2 18L15 6l9 8" fill="none" stroke="#1f7fc9" stroke-width="1.500"/><path class="k" d="M2 13l7-7 6 6 8-7M1 1v22h23"/></svg>
        <svg viewBox="0 0 24 24"><path class="g" d="M12 16l7-15 5 15v7z"/><path class="w" d="M1 16L9 3l8 12-6 6z"/><path class="b" d="M1 16l6 5 8-9 8 11H1z"/><path class="k" d="M0 23h24"/></svg>
        <svg viewBox="0 0 24 24"><path class="b" d="M1 5l6 6 9-7 8 5v8l-8-5-9 7-6-6z"/><path class="k" d="M1 1v22h23"/></svg>
        <svg viewBox="0 0 24 24"><path class="b" d="M5 4h5v19H5z"/><path class="g" d="M16 3h5v8h-5z"/><path class="w" d="M16 11h5v12h-5z"/><path class="k" d="M1 1v22h23M3 20l5-6 7 5 9-9"/></svg>
        <svg viewBox="0 0 24 24"><path class="b" d="M5 12h5v11H5z"/><path class="w" d="M10 3h6v20h-6z"/><path class="g" d="M16 8h5v15h-5z"/><path class="k" d="M1 1v22h23M3 20l6-6 6 5 9-9"/></svg>
        <svg viewBox="0 0 24 24"><path d="M2 12h6v7H2zM17 12h6v7h-6z" fill="#f4b26b" stroke="#d9730d" stroke-width="1.300"/><path class="g" d="M3 4c8 0 6 5 12 2l8-4v6c-6 1-7 6-11 6S8 9 3 9z"/><path class="b" d="M3 8c7 2 5 8 10 8s4-6 10-7v4c-5 0-5 7-10 7S9 13 3 12z"/><path class="k" d="M1 1v22h23"/></svg>

        <svg viewBox="0 0 24 24"><path class="w" d="M4 8h4v15H4zM19 2h4v21h-4z"/><path class="g" d="M8 8h5v7H8z"/><path class="b" d="M14 2h3v12h-3z"/><path class="k" d="M1 1v22h23M8 8v15M13 4v19M19 2v21M4 8h9M14 2h9"/></svg>
        <svg viewBox="0 0 24 24"><path class="b" d="M1 2h22v6H1zM4 8h16v7H4zM8 15h9v7H8z"/></svg>
        <svg viewBox="0 0 24 24"><path d="M17 1h5v5h-5zM5 16h4v4H5z" fill="#3b3a39"/><path d="M5 6h4v4H5zM11 10h4v4h-4zM18 15h4v4h-4z" fill="#83beec"/><path class="k" d="M1 1v22h23"/></svg>
        <svg viewBox="0 0 24 24"><circle class="w" cx="12" cy="12" r="11"/><path class="b" d="M12 1a11 11 0 0 1 8 19L12 12z"/></svg>
        <svg viewBox="0 0 24 24"><circle class="w" cx="12" cy="12" r="11"/><path class="b" d="M12 1A11 11 0 1 1 1 12h6a5 5 0 1 0 5-5z"/><circle class="w" cx="12" cy="12" r="5"/></svg>
        <svg viewBox="0 0 24 24"><path class="w" d="M12 1h11v22H12zM12 7h11M12 14h5v9M17 7v16M17 15h6"/><path class="b" d="M1 1h11v12H1zM1 13h11v10H1z"/></svg>

        <svg viewBox="0 0 24 24"><circle cx="13" cy="10" r="7.500" fill="#fff" stroke="#3b3a39" stroke-width="1.300"/><path d="M9 5l5 1 0 5-4 1-3-3zM16 6l4 3-2 4zM11 14l4-1 1 3-3 1z" fill="#2f8f55"/><path class="k" d="M10 1C2 3 2 17 12 20c3 0 5-1 7-2M12 20v3M6 23h14"/></svg>
        <svg viewBox="0 0 24 24"><path class="g" d="M1 2h22l-1 13-7 5-3 3-6-3-2-6-3-6z"/><path class="b" d="M1 2h9l2 5-5 4 0 3H3L1 8zM12 12h11l-3 8-4-1-4 3 1-5z"/></svg>
        <svg viewBox="0 0 24 24"><path d="M17 0L2 22l9-3z" fill="#49a6d8"/><path d="M17 0l6 24-12-7z" fill="#1f77b8"/></svg>
        <svg viewBox="0 0 24 24"><path class="w" d="M1 18C1 3 23 3 23 18h-6c0-6-10-6-10 0z"/><path class="b" d="M12 7c6 0 11 5 11 11h-6c0-3-2-5-5-5z"/><path class="k" d="M12 18l4-6M10 18h4"/></svg>
        <svg viewBox="0 0 24 24"><path class="w" d="M1 4h22v17H1z"/><text x="12" y="17" class="num">123</text></svg>
        <svg viewBox="0 0 24 24"><path class="w" d="M1 1h22v22H1z"/><path d="M7 7h12M7 14h12" stroke="#1f7fc9" stroke-width="2"/><path d="M4.500 4v16M7 10h6M7 18h6" stroke="#605e5c"/></svg>

        <svg viewBox="0 0 24 24"><path class="w" d="M1 2h22v19H1z"/><path d="M4 13l4-7 4 7z" fill="#3a9c5f"/><path d="M12 6h9l-4.500 7z" fill="#d13438"/><path d="M4 17h16" stroke="#8a8886"/></svg>
        <svg viewBox="0 0 24 24"><path class="w" d="M1 1h22v19H1z"/><path class="g" d="M1 1h22v4H1zM5 9h4v3H5zM5 15h4v3H5z"/><path class="w" d="M12 12h12l-4 5v7h-4v-7z"/></svg>
        <svg viewBox="0 0 24 24"><path class="w" d="M1 1h22v22H1z"/><path class="g" d="M1 1h22v4H1z"/><path class="k t" d="M1 11h22M1 17h22M8.500 5v18M16 5v18"/></svg>
        <svg viewBox="0 0 24 24"><path class="w" d="M1 1h22v22H1z"/><path class="g" d="M1 1h22v4H1z"/><path class="b" d="M15 5h8v18H1v-6h14z"/><path class="k t" d="M1 11h22M1 17h22M8.500 5v18M16 5v18"/></svg>
        <svg viewBox="0 0 24 24"><text x="11" y="19" class="py">R</text></svg>
        <svg viewBox="0 0 24 24"><text x="12" y="18" class="py">Py</text></svg>

        <svg viewBox="0 0 24 24"><path class="k" d="M1 1v22h23"/><path d="M1 5h16" stroke="#1f7fc9" stroke-width="1.500"/><circle class="b" cx="19" cy="5" r="3"/><path class="k t" d="M1 11h11M1 17h6"/><circle class="g" cx="13.500" cy="11" r="1.700"/><circle class="g" cx="8.500" cy="17" r="1.700"/></svg>
        <svg viewBox="0 0 24 24"><path class="k" d="M8 12h7M12 3v18M12 3h3M12 21h3"/><path class="b" d="M0 9h8v6H0zM15 1h8v5h-8zM15 9h8v5h-8zM15 17h8v5h-8z"/></svg>
        <svg viewBox="0 0 24 24"><path d="M1 3h22v14H11l-6 6v-6H1z" fill="#fff" stroke="#1f6fb5" stroke-width="1.500"/></svg>
        <svg viewBox="0 0 24 24"><path class="w" d="M4 14v9h17V7l-5-6H4v5M15 1v6h6"/><circle class="b" cx="4" cy="10" r="2.500"/><path d="M8 11h9M6 16h8M8 16h10" stroke="#2b88d8" stroke-width="1.500"/></svg>
        <svg viewBox="0 0 24 24"><path class="w" d="M6 1h12v10c0 4-4 6-6 6s-6-2-6-6zM6 4H1c0 6 2 9 6 9M18 4h5c0 6-2 9-6 9M9 17l-1 4h8l-1-4"/><path class="b" d="M6 20h12v3H6z"/></svg>
        <svg viewBox="0 0 24 24"><path class="w" d="M3 0h12l6 6v18H3zM15 0v6h6"/><path d="M7 14h3v7H7zM11 17h2.500v4H11zM15 11h2.500v10H15z" fill="#3b3a39"/></svg>

        <svg viewBox="0 0 24 24"><path class="w" d="M2 4h21v16H2z"/><path class="k" d="M0 23h24"/><text x="14" y="17" class="num">123</text><path d="M3 0h7L7 5h3L0 15l2-7H0z" fill="#ffc36b" stroke="#e07a10"/></svg>
        <svg viewBox="0 0 24 24"><path class="w" d="M2 2h21v20H2z"/><path class="g" d="M9 2h14v4H9zM6 15h4v3H6z"/><path class="w" d="M12 12h12l-4 5v7h-4v-7z"/><path d="M3 0h7L7 5h3L0 15l2-7H0z" fill="#ffc36b" stroke="#e07a10"/></svg>
        <svg viewBox="0 0 24 24"><path class="b" d="M2 14v9h14l-1-5 3-4 5-2V1H12l3 6-4 7z"/><path d="M9 17l5-4 2-7h3l-2 9-6 5z" fill="#fff"/><path d="M4 0c-7 1-4 9 0 13 4-4 7-12 0-13z" fill="#e07a10"/><circle cx="4" cy="5" r="1.600" fill="#fff"/><circle cx="20" cy="20" r="3.500" fill="#e07a10"/><circle cx="22" cy="13" r="2" fill="#e07a10"/></svg>
        <svg viewBox="0 0 24 24" fill="none" stroke="#8a2d9c" stroke-width="1.300"><path d="M1 12L10 2l2 2 2-2 9 10-9 11-2-2-2 2zM12 4L5 12M6 7l6 6-6 5M12 4l6 8-6 8M18 6l-6 7 6 5"/></svg>
        <svg viewBox="0 0 24 24" fill="none" stroke="#1f7fe0" stroke-width="1.500"><path d="M1 2h15l7 10-7 10H2l7-10zM9 12l9-8M4 20L18 7M11 21l10-11"/></svg>
        <svg viewBox="0 0 24 24"><path d="M3 9h2v2H3zM11 9h2v2h-2zM19 9h2v2h-2z" fill="#3b3a39"/></svg>
      </div>
      <div class="wells">
        <p class="vl">Values</p>
        <div class="well">Add data fields here</div>
        <p class="dt">Drill through</p>
        <div class="sw s1"><span>Cross-report</span><span class="tg off"><i></i>Off</span></div>
        <div class="sw s2"><span>Keep all filters</span><span class="tg">On<i></i></span></div>
        <div class="well w2">Add drill-through fields here</div>
      </div>
    </aside>

    <aside class="data">
      <div class="head"><h3>Data</h3><svg width="15" height="17" viewBox="0 0 15 17" class="ln"><path d="M1 1l7 7.500L1 16M7 1l7 7.500L7 16"/></svg></div>
      <div class="search"><svg width="19" height="19" viewBox="0 0 20 20" class="ln"><circle cx="13" cy="7" r="6"/><path d="M8.500 11.500L1 19"/></svg>Search</div>
      <svg width="0" height="0"><symbol id="tbl" viewBox="0 0 16 16"><path d="M1 3q0-2 2-2h10q2 0 2 2v10q0 2-2 2H3q-2 0-2-2zM1 5.500h14M1 10.500h14M5.500 1v14M10.500 1v14" fill="none" stroke="#484644" stroke-width="1.200"/></symbol></svg>
      <ul>
        <li><svg width="16" height="16"><use href="#tbl"/></svg>Dim_Bedrooms</li>
        <li><svg width="16" height="16"><use href="#tbl"/></svg>Dim_Condition status</li>
        <li><svg width="16" height="16"><use href="#tbl"/></svg>Dim_Floors</li>
        <li><svg width="16" height="16"><use href="#tbl"/></svg>Dim_Location</li>
        <li><svg width="16" height="16"><use href="#tbl"/></svg>Dim_Renovation status</li>
        <li><svg width="16" height="16"><use href="#tbl"/></svg>Dim_Waterfront</li>
        <li><svg width="16" height="16"><use href="#tbl"/></svg>FactTable</li>
        <li><svg width="16" height="16"><use href="#tbl"/></svg>Measures Table</li>
      </ul>
    </aside>
  </main>

  <div class="status"><span>Page 2 of 2</span>
    <div class="zoom"><b>-</b><svg width="125" height="16" viewBox="0 0 125 16"><path d="M0 8.500h125" stroke="#605e5c"/><path d="M42 2h5v13h-5zM62 5h2v7h-2z" fill="#605e5c"/></svg><b>+</b><em>73%</em><svg width="21" height="16" viewBox="0 0 21 16" fill="none" stroke="#605e5c" stroke-width="1.400"><path d="M.7 .700h19.600v14.600H.7zM4 6V4h3M14 4h3v2M17 10v2h-3M7 12H4v-2"/></svg></div>
  </div>

  <footer class="taskbar">
    <div class="news"><svg width="34" height="34" viewBox="0 0 34 34"><rect x="0" y="11" width="28" height="10" rx="2" fill="#ee1c75"/><rect x="3" y="13" width="14" height="3" fill="#fff"/><path d="M0 18h28v12q0 2-2 2H2q-2 0-2-2z" fill="#b5b3b2"/><path d="M3 21h9v8H3zM15 21h8v3h-8zM15 26h8v3h-8z" fill="#3b3a39"/><circle cx="23" cy="10" r="10" fill="#c42b1c"/><text x="23" y="15" class="badge">1</text></svg><p>Breaking news<br><span>Unfolding now</span></p></div>
    <div class="dock">
      <svg class="win" width="29" height="29" viewBox="0 0 29 29"><defs><linearGradient id="wg" x1="0" y1="0" x2="1" y2="1"><stop offset="0" stop-color="#4fc8fb"/><stop offset="1" stop-color="#0067c9"/></linearGradient></defs><path d="M0 1q0-1 1-1h13v14H0zM15 0h13q1 0 1 1v13H15zM0 15h14v14H1q-1 0-1-1zM15 15h14v13q0 1-1 1H15z" fill="url(#wg)"/></svg>
      <div class="tsearch"><svg width="19" height="19" viewBox="0 0 19 19" fill="none" stroke="#1f1f1f" stroke-width="2.200"><circle cx="8" cy="8" r="6.500"/><path d="M12.500 12.500L18 18"/></svg><span>Search</span>
        <svg width="62" height="26" viewBox="0 0 62 26"><path d="M12 9q19-8 40 0M12 16q19 8 40 0" fill="none" stroke="#2b4a7f" stroke-width="1.400" stroke-dasharray="2 2"/><circle cx="8" cy="13" r="7.500" fill="#2f8fc9"/><path d="M3 9l6-3 4 4 0 6-5 4-5-5z" fill="#4f8a2e"/><circle cx="54" cy="13" r="7.500" fill="#2f8fc9"/><path d="M50 8l7-1 3 5-2 5-4 2-3-5z" fill="#4f8a2e"/><path d="M34 0l3 3 5-1 1 5 4 3-2 4 1 5-5 1-3 4-4-2-5 2-2-4-5-2 1-5-2-4 4-3 1-5h5z" fill="#f08a24"/><circle cx="34" cy="12.500" r="9" fill="#fcc02b"/><path d="M13 3L5 24M58 3l-8 20" stroke="#333c66"/></svg>
      </div>
      <svg class="i1" width="30" height="28" viewBox="0 0 30 28"><path d="M0 8h22v19H0z" fill="#2b2b2b"/><path d="M7 0h21q2 0 2 2v18H7z" fill="#f4f4f6" opacity=".95"/><path d="M7 8h15v12H7z" fill="#b4b4b6"/></svg>
      <svg class="i2" width="29" height="29" viewBox="0 0 29 29"><defs><linearGradient id="cg" x1="0" y1="0" x2="1" y2="1"><stop offset="0" stop-color="#9a6fb8"/><stop offset="1" stop-color="#4a4fc4"/></linearGradient></defs><path d="M14.500 0a14 14 0 1 1-6 26.500L0 28l2-7A14 14 0 0 1 14.500 0z" fill="url(#cg)"/><rect x="6" y="9" width="11" height="11" rx="2" fill="#fff"/><path d="M18 13l4-3v9l-4-3z" fill="#fff"/></svg>
      <svg class="i3" width="30" height="28" viewBox="0 0 30 28"><path d="M0 2q0-2 2-2h8l3 3v8H0z" fill="#d69a10"/><path d="M0 5h12l3-2h13q2 0 2 2v21H0z" fill="#ffcf48"/><path d="M5 27v-5q0-3 3-3h14q3 0 3 3v5z" fill="#1a7fd4"/><path d="M9 23h12" stroke="#0a4f93" stroke-width="1.500"/></svg>
      <svg class="i4" width="30" height="30" viewBox="0 0 30 30"><defs><linearGradient id="eg" x1="0" y1="0" x2="1" y2=".4"><stop offset="0" stop-color="#1b8fd8"/><stop offset="1" stop-color="#5fe06a"/></linearGradient></defs><circle cx="15" cy="15" r="15" fill="#1566b8"/><path d="M1 11C4-4 29-4 30 13c0 6-8 7-11 4 2-7-11-11-18-6z" fill="url(#eg)"/><path d="M15 13c-4 7 3 14 13 9-2 4-7 8-12 8-8-2-10-14-1-17z" fill="#0d4f9a"/><path d="M16 11c-4 6 0 11 6 12 2 0 5-1 6-2l-1 1c-8 2-14-3-11-11zM30 15c-1 4-8 5-11 2-1 4 8 6 10 3z" fill="#dde3f3"/></svg>
      <svg class="i5" width="29" height="29" viewBox="0 0 29 29"><path d="M9 6V1.500h11V6" fill="none" stroke="#2bb6ea" stroke-width="2"/><path d="M0 5h29v20q0 4-4 4H4q-4 0-4-4z" fill="#17518f"/><path d="M9 11h5v5H9z" fill="#f25022"/><path d="M15 11h5v5h-5z" fill="#7fba00"/><path d="M9 17h5v5H9z" fill="#00a4ef"/><path d="M15 17h5v5h-5z" fill="#ffb900"/></svg>
      <svg class="i6" width="30" height="30" viewBox="0 0 30 30"><circle cx="15" cy="15" r="15" fill="#fbc116"/><path d="M2 7.500A15 15 0 0 1 28 7.500H15l-6.500 11z" fill="#e33b2e"/><path d="M2 7.500A15 15 0 0 0 14 30l7.500-12-6.500 4-6.500-3.500z" fill="#229342"/><circle cx="15" cy="15" r="7.500" fill="#fff"/><circle cx="15" cy="15" r="6" fill="#1a73e8"/></svg>
      <div class="pbi"><svg width="23" height="31" viewBox="0 0 23 31"><path d="M12 1q0-1 1-1h9q1 0 1 1v29H12z" fill="#c98a0a"/><path d="M6 9q0-1 1-1h9q1 0 1 1v21H6z" fill="#e8b721"/><path d="M0 16q0-1 1-1h9q1 0 1 1v15H1q-1 0-1-1z" fill="#f7dc6b"/></svg></div>
    </div>
    <div class="tray">
      <svg width="13" height="8" viewBox="0 0 13 8" class="ln"><path d="M1 7l5.500-5.500L12 7"/></svg>
      <svg width="20" height="14" viewBox="0 0 20 14"><path d="M5 13c-6 0-6-7 0-7 2-7 10-7 11 0 5 0 5 7 0 7z" fill="#b9bec4" stroke="#1f1f1f" stroke-width="1.300"/></svg>
      <p class="lang">ENG<br>IN</p>
      <svg width="20" height="16" viewBox="0 0 20 16" class="ln"><path d="M1 6C6 0 14 0 19 6M4 9c3-4 9-4 12 0M7 12c2-2 4-2 6 0"/><circle cx="10" cy="14" r="1.300" fill="#222"/></svg>
      <svg width="19" height="17" viewBox="0 0 19 17" class="ln"><path d="M1 6h3l5-4v13l-5-4H1zM12 5c2 2 2 5 0 7M15 3c3 3 3 8 0 11"/></svg>
      <svg width="20" height="13" viewBox="0 0 20 13" class="ln"><rect x="1" y="1" width="16" height="11" rx="3"/><path d="M18.500 4.500v4"/><path d="M3 3h4v7H3z" fill="#222"/></svg>
      <p class="clock">16:08<br>03-01-2024</p>
      <svg width="16" height="19" viewBox="0 0 16 19" class="ln"><path d="M1 14.500l2-4V7c0-8 10-8 10 0v3.500l2 4zM6 15c0 3 4 3 4 0"/></svg>
    </div>
  </footer>
</div>
</body>
</html>
```
FILE: styles.css
```css
* { box-sizing: border-box; }
body { margin: 0; font-family: "Open Sans", "Noto Sans", sans-serif; color: #252423; font-size: 14.25px; }
h3, h4, h5, h6, p, ul, hr { margin: 0; padding: 0; font-weight: 400; }
svg { display: block; flex: none; }
.app { width: 1920px; height: 1080px; overflow: hidden; display: flex; flex-direction: column; background: #f3f2f1; }
.ln { fill: none; stroke: #323130; stroke-width: 1.4; }
.ln.white { stroke: #fff; }
.ln.dim { stroke: #7d7b79; }

/* Title bar */
.titlebar { height: 43px; flex: none; background: #3b3a39; color: #fff; display: flex; align-items: center; }
.quick { width: 126px; padding-left: 22px; display: flex; gap: 19px; }
.doc { width: 757px; font-size: 14.2px; padding-top: 5px; white-space: nowrap; }
.doc b { font-weight: 400; margin: 0 1px; font-size: 13px; }
.tri { display: inline-block; border: 5.5px solid transparent; border-top: 7px solid #fff; border-bottom: 0; margin: 0 0 3px 5px; }
.topsearch { width: 500px; height: 30px; background: #d3d3d1; border-radius: 2px; display: flex; align-items: center; gap: 14px; padding-left: 21px; font-size: 16.1px; color: #23594c; }
.signin { margin-left: 270px; width: 85px; display: flex; align-items: center; gap: 13px; white-space: nowrap; font-size: 14.2px; }
.winbtns { margin-left: 38px; display: flex; gap: 42px; padding-top: 3px; }

/* Menu tabs */
.menubar { height: 43px; flex: none; background: #fafafa; display: flex; font-size: 16.6px; line-height: 40px; }
.menubar > span { white-space: nowrap; height: 38px; }
.m1 { margin-left: 28px; width: 73px; }
.m2 { width: 48px; margin-right: 39px; }
.m2.on { font-weight: 600; border-bottom: 3px solid #117865; font-size: 16.4px; }
.m3 { width: 83px; } .m4 { width: 113px; } .m5 { width: 76px; } .m6 { width: 109px; }
.share { margin: 5px 7px 0 auto; width: 105px; height: 30px; background: #117865; border-radius: 4px; color: #fff; display: flex; align-items: center; padding-left: 9px; font-size: 14.2px; }
.share span { margin: 0 5px 0 10px; font-weight: 500; }

/* Ribbon */
.ribbon { height: 114px; flex: none; background: #fafafa; display: flex; box-shadow: 0 2px 5px rgba(0,0,0,.18); z-index: 2; position: relative; }
.group { height: 110px; margin-top: 2px; border-right: 1px solid #d2d0ce; display: flex; flex-direction: column; }
.g-clip { width: 201px; } .g-data { width: 476px; padding-left: 6px; } .g-query { width: 145px; padding-left: 11px; }
.g-insert { width: 184px; padding-left: 10px; } .g-calc { width: 143px; padding-left: 10px; } .g-sens { width: 91px; padding-left: 7px; } .g-share { width: 74px; padding-left: 4px; }
.btns { display: flex; height: 94px; }
.rb { display: flex; flex-direction: column; align-items: center; padding-top: 6px; }
.rb svg { height: 40px; }
.rb p { font-size: 14.1px; line-height: 20px; text-align: center; white-space: nowrap; padding-top: 3px; }
.rb u { display: inline-block; width: 5px; height: 5px; border: solid #3b3a39; border-width: 0 2px 2px 0; transform: rotate(45deg); margin: 0 1px 3px 4px; }
.off, .clips { color: #c0bebd; }
.rb.off u { border-color: #c0bebd; }
.w48 { width: 48px; } .w50 { width: 50px; } .w52 { width: 52px; } .w56 { width: 56px; } .w60 { width: 60px; } .w62 { width: 62px; } .w64 { width: 64px; }
.w66 { width: 66px; } .w67 { width: 67px; } .w68 { width: 68px; } .w76 { width: 76px; } .w98 { width: 98px; }
.paste { width: 54px; margin-left: 9px; margin-right: 2px; }
.clips { display: flex; flex-direction: column; font-size: 14.1px; margin-top: -1px; }
.clips div { display: flex; align-items: center; gap: 4px; height: 30px; white-space: nowrap; }
.group h6 { font-size: 11.8px; line-height: 16px; text-align: center; margin-left: -4px; padding-top: 2px; }
.g-clip h6 { margin-left: 0; }
.g-query h6, .g-insert h6 { margin-left: -9px; }
.g-calc h6 { margin-left: -11px; }
.g-sens h6 { margin-left: -6px; }
.collapse { margin: 98px 6px 0 auto; }
.ico { fill: none; stroke: #4a4846; stroke-width: 1.6; }
.wh { fill: #fff; }
.xl { font-size: 14px; font-weight: 700; fill: #fff; text-anchor: middle; }

/* Work area */
.work { flex: none; height: 791px; display: flex; border-bottom: 1px solid #d8d6d4; }
.rail { width: 51px; border-right: 1px solid #d8d6d4; display: flex; flex-direction: column; align-items: center; padding-top: 16px; gap: 29px; background: linear-gradient(#117865, #117865) 0 0 / 3px 50px no-repeat; }
.stage { width: 1167px; display: flex; flex-direction: column; background: #fff; }
.page { height: 657px; background: #fff; box-shadow: 0 2px 10px rgba(0,0,0,.22); overflow: hidden; }
.below { height: 89px; }
.banner { height: 66px; background: #595959; display: grid; font-family: Lato, sans-serif; color: #f2f2f2; }
.banner > * { grid-area: 1 / 1; }
.brand { font-size: 22.8px; padding: 15px 0 0 50px; line-height: 28px; }
.headline { padding-left: 334px; color: #fff; display: flex; flex-direction: column; white-space: nowrap; }
.headline strong { font-weight: 400; font-size: 27.8px; line-height: 32px; margin-top: -3px; -webkit-text-stroke: .3px #fff; }
.headline em { font-size: 19.3px; line-height: 24px; margin-top: 1px; }
.content { display: flex; padding-top: 21px; }
.tiles { width: 141px; display: flex; flex-direction: column; font-family: Lato, sans-serif; }
.tile { width: 105px; border-radius: 19px; background: #f2f2f2; position: relative; display: flex; flex-direction: column; align-items: center; box-shadow: 0 4px 4px rgba(0,0,0,.4); }
.tile b { font-size: 20px; line-height: 24px; color: #7f7f7f; }
.logo { height: 113px; background: #006083; border: 1px solid #2f3560; padding-top: 31px; box-shadow: none; }
.over { height: 142px; margin-top: 14px; border: 2.5px solid #595959; border-radius: 28px; padding-top: 13px; box-shadow: 0 2px 3px rgba(0,0,0,.25); }
.over svg { margin: 11px 11px 0 0; }
.over b { font-size: 20.5px; margin-right: 3px; }
.loc { height: 140px; margin-top: 8px; padding-top: 13px; }
.loc b { font-weight: 400; color: #262626; text-shadow: 0 3px 3px rgba(0,0,0,.4); margin-left: 3px; font-size: 20.6px; }
.loc svg { margin: 17px 11px 0 0; }
.loc .arrow { position: absolute; left: 105px; top: 11px; margin: 0; }
.about { height: 140px; margin-top: 14px; padding-top: 23px; }
.about b { font-weight: 400; color: #595959; text-shadow: 0 3px 3px rgba(0,0,0,.3); font-size: 21px; margin-right: 5px; }
.about svg { margin: 2px 0 0 1px; }
.mapcol { width: 659px; }
.redtitle { width: 629px; height: 39px; background: #f00; color: #fff; font-weight: 700; font-size: 22.8px; line-height: 44px; display: flex; justify-content: space-between; padding: 0 4px 0 1px; white-space: nowrap; }
.redtitle i { width: 8px; height: 28px; margin-top: 5px; background: #c8c8c8; }
.mapbox { width: 629px; height: 503px; margin-top: 28px; background: #f2f2f2; padding: 7px 0 0 1px; }
.lbl text { font-size: 10.3px; font-weight: 600; fill: #a9bcc6; }
.lbl.land text { fill: #fff; font-weight: 700; font-size: 9.2px; }
.lbl text.big, .lbl.land text.big { font-size: 12px; }
.bubble circle { fill: #e0643399; stroke: #c8400a; }
.city text { font-size: 17.3px; font-weight: 700; font-style: italic; fill: #fff; }
.credit text { font-family: "Liberation Sans", sans-serif; font-size: 8.7px; fill: #fff; }
.card { width: 356px; background: #f2f2f2; padding-left: 6px; }
.card h4 { font-weight: 700; color: #7f7f7f; font-size: 13.2px; letter-spacing: .2px; line-height: 18px; padding-top: 6px; white-space: nowrap; height: 43px; }
.states { height: 264px; }
.floors { height: 286px; margin-top: 20px; }
.floors h4 { padding-top: 2px; height: 39px; letter-spacing: .22px; padding-left: 1px; }
table { border-collapse: collapse; table-layout: fixed; width: 330px; margin-left: 1px; }
.floors table { width: 292px; }
.c140 { width: 139.5px; } .c52 { width: 52px; } .c86 { width: 86.500px; } .c101 { width: 101px; } .c53 { width: 53px; }
th { background: #333; color: #fff; font-size: 14.8px; text-align: left; height: 33px; padding: 0 0 7px 5px; white-space: nowrap; border-right: 1px solid #5a5a5a; border-bottom: 1px solid #118dff66; line-height: 20px; }
th:last-child { border-right: 0; }
td { height: 29.200px; padding: 4px 5px 0; text-align: right; font-size: 16.8px; letter-spacing: .6px; line-height: 24px; white-space: nowrap; background: #fff; border-bottom: 1px solid #e6e6e6; }
td:first-child { text-align: left; padding-right: 0; }
tr:nth-child(odd) td { background: #ececec; }

/* Page tabs */
.tabs { height: 44px; background: #f3f2f1; display: flex; }
.device { width: 30px; height: 39px; margin-left: 12px; display: flex; align-items: center; justify-content: center; padding-bottom: 3px; }
.device.on { border-bottom: 4px solid #117865; }
.device.ph { margin-left: 25px; padding-bottom: 1px; }
.pv, .nx { border: 6px solid transparent; height: 0; margin-top: 15px; }
.pv { border-right: 6px solid #c8c6c4; border-left: 0; margin-left: 20px; }
.nx { border-left: 6px solid #c8c6c4; border-right: 0; margin-left: 22px; margin-right: 5px; }
.tab { background: #fff; text-align: center; line-height: 43px; border-left: 1px solid #a19f9d; position: relative; }
.t1 { width: 112px; margin-left: 4px; }
.t2 { width: 109px; border-color: #c8c6c4; border-bottom: 5px solid #117865; font-weight: 600; font-size: 13.8px; border-right: 1px solid #c8c6c4; }
.tab sup { position: absolute; right: 4px; top: -9px; font-size: 14px; }
.plus { width: 49px; height: 40px; margin-top: 2px; background: #117865; display: flex; align-items: center; justify-content: center; }

/* Filters pane */
h3 { font-size: 18.4px; font-weight: 600; line-height: 24px; }
.filters { width: 250px; }
.fbody { height: 746px; background: #fff; border-left: 1px solid #8a8886; padding-left: 10px; }
.filters .head { display: flex; align-items: center; height: 50px; padding-left: 4px; }
.filters h3 { margin-left: 9px; width: 54px; }
.eye { margin-left: 84px; }
.dbl { margin-left: 22px; }
.search { display: flex; align-items: center; border: 1px solid #a19f9d; border-radius: 2px; }
.filters .search { width: 224px; height: 38px; margin-top: 7px; padding-left: 13px; gap: 16px; font-size: 15.5px; background: #fff; }
.filters hr { border: 0; border-top: 1px solid #a19f9d; margin: 5px 0 0 -10px; }
.sect { display: flex; justify-content: space-between; padding-right: 14px; line-height: 22px; height: 22px; }
.sect.a { margin-top: 20px; }
.sect.b { margin-top: 33px; }
.dots { font-size: 15px; letter-spacing: 1.6px; }
.drop { width: 229px; height: 57px; margin-top: 10px; border: 1px solid #c8c6c4; border-radius: 2px; text-align: center; line-height: 57px; }

/* Visualizations pane */
.viz { width: 227px; border-left: 1px solid #d8d6d4; border-right: 1px solid #d8d6d4; }
.viz .head, .data .head { display: flex; align-items: center; justify-content: space-between; height: 50px; padding: 0 11px 0 10px; }
.viz h5 { font-size: 14.100px; line-height: 20px; font-weight: 500; padding: 1px 0 0 10px; margin-top: -3px; height: 25px; }
.modes { display: flex; padding-left: 10px; height: 40px; }
.mode { width: 40px; height: 40px; background: #d2d0ce; border-radius: 3px; padding: 5px; }
.brush { margin: 5px 0 0 48px; }
.notch { margin-top: 5px; }
.icons { display: grid; grid-template-columns: repeat(6, 23px); grid-auto-rows: 23px; gap: 12px; padding: 14px 0 11px 14px; border-bottom: 1px solid #d8d6d4; height: 259px; }
.icons svg { width: 23px; height: 23px; overflow: visible; }
.k { fill: none; stroke: #3b3a39; stroke-width: 1.500; }
.k.t { stroke-width: 1; stroke: #605e5c; }
.b { fill: #83beec; stroke: #1268b3; stroke-width: 1.300; }
.g { fill: #c8c6c4; stroke: #797775; stroke-width: 1.200; }
.w { fill: #fafafa; stroke: #4a4846; stroke-width: 1.300; }
.num { font-size: 10.500px; fill: #2b88d8; text-anchor: middle; }
.py { font-size: 20.5px; font-weight: 600; fill: #2080c0; text-anchor: middle; }
.wells { padding-left: 5px; display: flex; flex-direction: column; }
.wells p { line-height: 20px; padding-left: 10px; }
.vl { margin-top: 11px; }
.dt { font-weight: 500; margin-top: 14px; }
.well { width: 213px; height: 35px; margin-top: 6px; border: 1px dashed #c8c6c4; border-radius: 3px; background: #fff; padding-left: 13px; line-height: 33px; white-space: nowrap; }
.w2 { height: 32px; padding-left: 10px; line-height: 31px; margin-top: 13px; }
.sw { display: flex; justify-content: space-between; align-items: center; padding: 0 20px 0 10px; height: 20px; width: 213px; }
.sw span:first-child { margin-top: -2px; }
.s1 { margin-top: 11px; } .s2 { margin-top: 14px; }
.tg { width: 40px; height: 20px; border-radius: 10px; background: #117865; color: #fff; font-size: 10.800px; display: flex; align-items: center; gap: 5px; padding-left: 5px; }
.tg i { width: 10px; height: 10px; border-radius: 50%; background: #fff; }
.tg.off { background: none; border: 1px solid #605e5c; color: #605e5c; gap: 2px; }
.tg.off i { background: #605e5c; }

/* Data pane */
.data { width: 225px; }
.data .search { width: 215px; height: 33px; margin: 7px 0 0 5px; padding-left: 9px; gap: 7px; font-size: 16px; border-color: #797775; color: #605e5c; }
.data ul { list-style: none; padding: 11px 0 0 13px; }
.data li { height: 30px; line-height: 31px; display: flex; align-items: center; white-space: nowrap; gap: 8px; }
.data li::before { content: ""; width: 8px; height: 8px; border: solid #797775; border-width: 1px 1px 0 0; transform: rotate(45deg); margin: 0 1px 0 -3px; }

/* Status bar */
.status { height: 29px; flex: none; border-bottom: 2px solid #000; display: flex; align-items: center; justify-content: space-between; padding: 0 23px 0 6px; color: #484644; }
.zoom { display: flex; align-items: center; }
.zoom b { font-size: 19px; font-weight: 600; line-height: 20px; color: #605e5c; }
.zoom b:first-child { margin-right: 5px; }
.zoom svg + b { margin-left: 7px; }
.zoom em { font-style: normal; color: #797775; margin: 0 19px 0 20px; }

/* Taskbar */
.taskbar { height: 60px; flex: none; display: flex; align-items: center; background: linear-gradient(90deg, #dfebf4 0, #deeaf5 18%, #d2dff6 25%, #d9dcf1 31%, #d4e1f6 41%, #d8dcf0 62%, #dce4f3 78%, #dfeaf4 100%); }
.news { width: 586px; padding-left: 26px; display: flex; gap: 3px; align-items: center; white-space: nowrap; }
.news svg { margin-top: -7px; }
.news p { line-height: 20px; font-size: 14.300px; }
.news span { color: #5d6064; }
.badge { font-size: 14px; fill: #fff; text-anchor: middle; }
.dock { width: 731px; margin-left: 26px; display: flex; align-items: center; }
.tsearch { width: 273px; height: 38px; margin: 0 16px 0 17px; border-radius: 19px; background: #f2f6fc; border: 1px solid #c3cee0; display: flex; align-items: center; padding: 0 4px 0 13px; font-size: 16.1px; color: #4a4c50; }
.tsearch span { margin: 0 auto 0 12px; }
.i2 { margin-left: 25px; }
.i3, .i4, .i5, .i6 { margin-left: 26px; }
.i3, .i6 { background: linear-gradient(#797b85, #797b85) 50% 100% / 8px 4px no-repeat; height: 44px; padding: 8px 0; }
.pbi { width: 48px; height: 48px; margin-left: 15px; background: linear-gradient(#0078d4, #0078d4) 50% 100% / 20px 4px no-repeat #eceff9; border-radius: 4px; display: flex; justify-content: center; padding-top: 8px; }
.tray { margin-left: auto; display: flex; align-items: center; padding-right: 26px; }
.tray p { font-size: 14px; line-height: 20px; }
.tray svg:nth-of-type(2) { margin-left: 24px; }
.lang { text-align: center; width: 34px; margin: 0 19px 0 21px; }
.tray svg:nth-of-type(4) { margin-left: 9px; }
.tray svg:nth-of-type(5) { margin-left: 13px; }
.tray .clock { text-align: right; width: 84px; margin: 0 13px 0 13px; font-size: 14.2px; white-space: nowrap; }
```
